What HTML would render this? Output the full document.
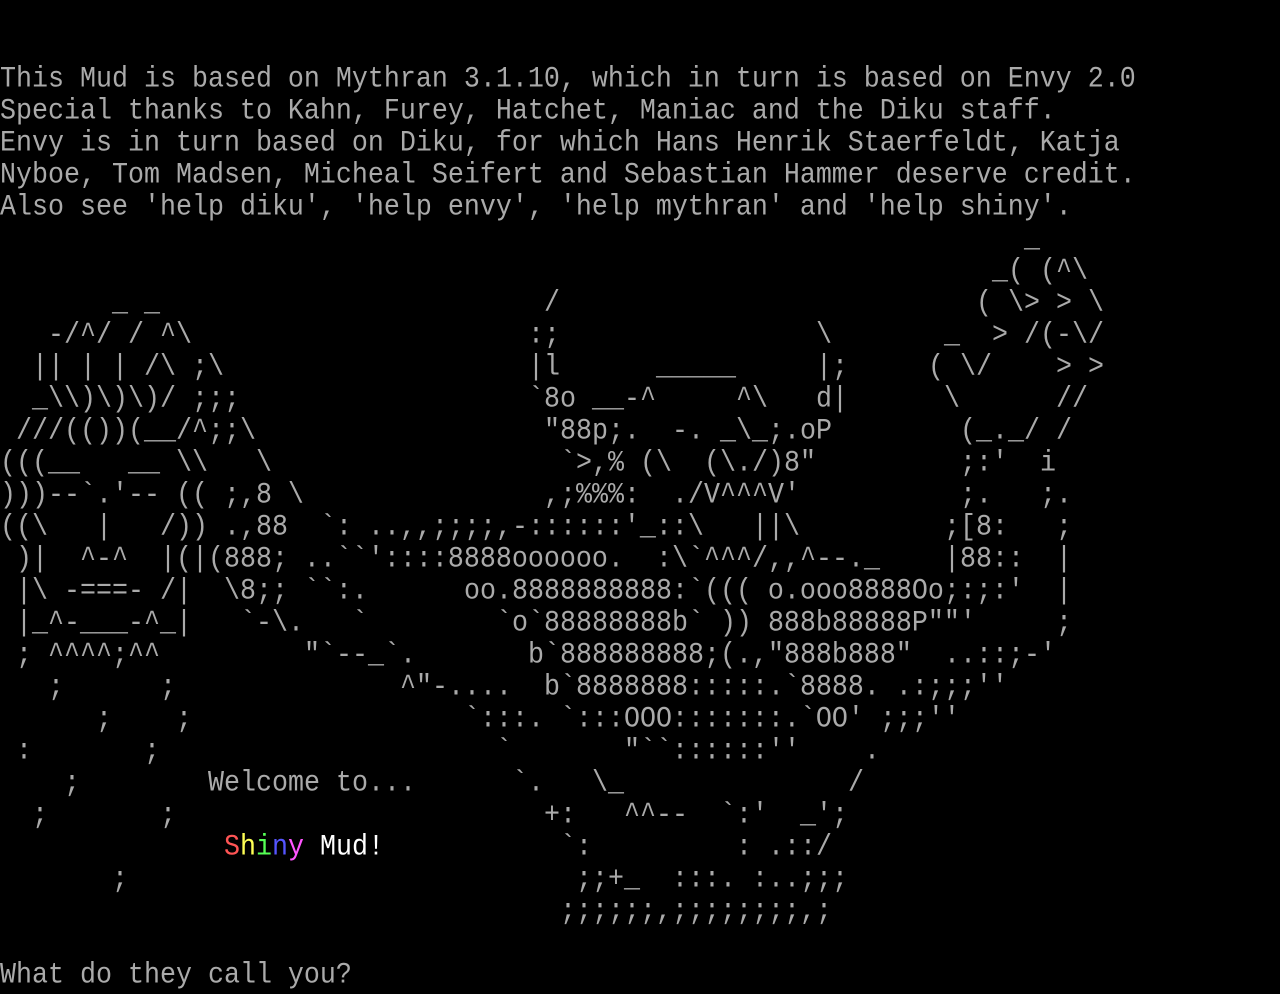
<!DOCTYPE html>
<html><head><meta charset="utf-8"><style>
html,body{margin:0;padding:0;background:#000;}
body{width:1280px;height:992px;position:relative;overflow:hidden;font-family:"Liberation Mono","DejaVu Sans Mono",monospace;font-size:26.67px;color:#aaa;}
p{position:absolute;left:0;margin:0;height:32px;line-height:32px;white-space:pre;width:1280px;transform:scaleY(1.12);transform-origin:50% 55%;}
p b{position:absolute;top:0;font-weight:normal;white-space:pre;}
</style></head><body>
<p style="top:64px"><b style="left:0">This Mud is based on Mythran 3.1.10, which in turn is based on Envy 2.0</b></p>
<p style="top:96px"><b style="left:0">Special thanks to Kahn, Furey, Hatchet, Maniac and the Diku staff.</b></p>
<p style="top:128px"><b style="left:0">Envy is in turn based on Diku, for which Hans Henrik Staerfeldt, Katja</b></p>
<p style="top:160px"><b style="left:0">Nyboe, Tom Madsen, Micheal Seifert and Sebastian Hammer deserve credit.</b></p>
<p style="top:192px"><b style="left:0">Also see 'help diku', 'help envy', 'help mythran' and 'help shiny'.</b></p>
<p style="top:224px"><b style="left:1024px">_</b></p>
<p style="top:256px"><b style="left:992px">_( (^\</b></p>
<p style="top:288px"><b style="left:112px">_ _</b><b style="left:544px">/</b><b style="left:976px">( \&gt; &gt; \</b></p>
<p style="top:320px"><b style="left:48px">-/^/ / ^\</b><b style="left:528px">:;</b><b style="left:816px">\</b><b style="left:944px">_  &gt; /(-\/</b></p>
<p style="top:352px"><b style="left:32px">|| | | /\ ;\</b><b style="left:528px">|l</b><b style="left:656px">_____</b><b style="left:816px">|;</b><b style="left:928px">( \/    &gt; &gt;</b></p>
<p style="top:384px"><b style="left:32px">_\\)\)\)/ ;;;</b><b style="left:528px">`8o __-^</b><b style="left:736px">^\</b><b style="left:816px">d|</b><b style="left:944px">\</b><b style="left:1056px">//</b></p>
<p style="top:416px"><b style="left:16px">///(())(__/^;;\</b><b style="left:544px">"88p;.  -. _\_;.oP</b><b style="left:960px">(_._/ /</b></p>
<p style="top:448px"><b style="left:0">(((__   __ \\   \</b><b style="left:560px">`&gt;,% (\  (\./)8"</b><b style="left:960px">;:'</b><b style="left:1040px">i</b></p>
<p style="top:480px"><b style="left:0">)))--`.'-- (( ;,8 \</b><b style="left:544px">,;%%%:  ./V^^^V'</b><b style="left:960px">;.</b><b style="left:1040px">;.</b></p>
<p style="top:512px"><b style="left:0">((\   |   /)) .,88</b><b style="left:320px">`: ..,,;;;;,-::::::'_::\</b><b style="left:752px">||\</b><b style="left:944px">;[8:</b><b style="left:1056px">;</b></p>
<p style="top:544px"><b style="left:16px">)|  ^-^  |(|(888; ..``'::::8888oooooo.</b><b style="left:656px">:\`^^^/,,^--._</b><b style="left:944px">|88::</b><b style="left:1056px">|</b></p>
<p style="top:576px"><b style="left:16px">|\ -===- /|  \8;; ``:.</b><b style="left:464px">oo.8888888888:`((( o.ooo8888Oo;:;:'</b><b style="left:1056px">|</b></p>
<p style="top:608px"><b style="left:16px">|_^-___-^_|</b><b style="left:240px">`-\.</b><b style="left:352px">`</b><b style="left:496px">`o`88888888b` )) 888b88888P""'</b><b style="left:1056px">;</b></p>
<p style="top:640px"><b style="left:16px">;</b><b style="left:48px">^^^^;^^</b><b style="left:304px">"`--_`.</b><b style="left:528px">b`888888888;(.,"888b888"</b><b style="left:944px">..::;-'</b></p>
<p style="top:672px"><b style="left:48px">;</b><b style="left:160px">;</b><b style="left:400px">^"-....</b><b style="left:544px">b`8888888:::::.`8888. .:;;;''</b></p>
<p style="top:704px"><b style="left:96px">;</b><b style="left:176px">;</b><b style="left:464px">`:::. `:::OOO:::::::.`OO' ;;;''</b></p>
<p style="top:736px"><b style="left:16px">:</b><b style="left:144px">;</b><b style="left:496px">`</b><b style="left:624px">"``::::::''</b><b style="left:864px">.</b></p>
<p style="top:768px"><b style="left:64px">;</b><b style="left:208px">Welcome to...</b><b style="left:512px">`.</b><b style="left:592px">\_</b><b style="left:848px">/</b></p>
<p style="top:800px"><b style="left:32px">;</b><b style="left:160px">;</b><b style="left:544px">+:</b><b style="left:624px">^^--</b><b style="left:720px">`:'</b><b style="left:800px">_';</b></p>
<p style="top:832px"><b style="left:224px"><span style="color:#ff5555">S</span><span style="color:#ffff55">h</span><span style="color:#55ff55">i</span><span style="color:#5555ff">n</span><span style="color:#ff55ff">y</span> <span style="color:#fff">Mud!</span></b><b style="left:560px">`:</b><b style="left:736px">:</b><b style="left:768px">.::/</b></p>
<p style="top:864px"><b style="left:112px">;</b><b style="left:576px">;;+_</b><b style="left:672px">:::.</b><b style="left:752px">:..;;;</b></p>
<p style="top:896px"><b style="left:560px">;;;;;;,;;;;;;;;,;</b></p>
<p style="top:960px"><b style="left:0">What do they call you?</b></p>
</body></html>
